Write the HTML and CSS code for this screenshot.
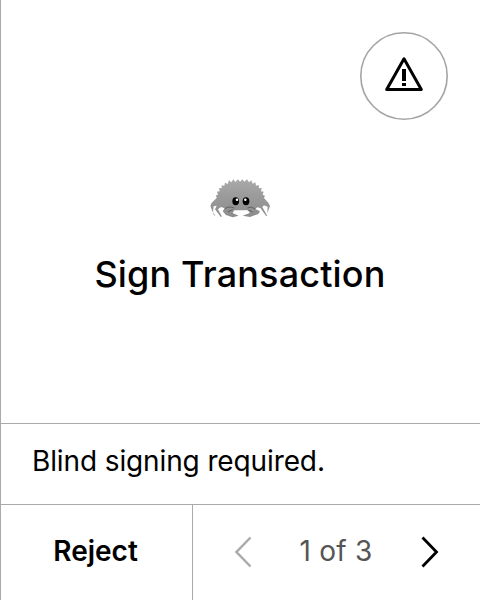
FILE: index.html
```html
<!DOCTYPE html>
<html lang="en">
<head><meta charset="utf-8"><title>Sign Transaction</title><link rel="stylesheet" href="styles.css"></head>
<body>
<main class="screen">
<section class="content">
<button class="alert" aria-label="Warning"><svg width="88" height="88" viewBox="0 0 88 88"><circle cx="44" cy="44" r="43.200" fill="none" stroke="#a4a4a4" stroke-width="1.600"/><g transform="translate(24 24)"><path d="M20 2.800L37.300 33.500H2.700Z" fill="none" stroke="#000" stroke-width="3" stroke-linejoin="round"/><path d="M18 13h4v12h-4zM18 27h4v3h-4z"/></g></svg></button>
<div class="summary">
<svg class="crab" width="60" height="40" viewBox="30 27 180 120">
<defs><linearGradient id="shell" x1="0" y1="0" x2="0" y2="1"><stop offset="0" stop-color="#aaa"/><stop offset=".4" stop-color="#9c9c9c"/><stop offset="1" stop-color="#8c8c8c"/></linearGradient></defs>
<path fill="url(#shell)" d="M50 84L48 76L54 74L51 65L59 64L57 54L65 55L65 46L73 47L75 38L83 42L87 31L94 37L100 28L106 36L114 28L120 35L127 28L133 35L141 28L147 37L154 31L158 41L166 37L168 47L176 45L177 55L185 54L183 64L191 65L188 74L195 77L192 84L205 98L210 108L202 130L203 110L192 106L187 111L202 138L198 137L181 114L172 112L166 117L180 124L175 132L150 141L128 137L147 130L140 121H104L98 129L116 137L98 142L78 135L68 124L74 115L63 111L54 118L66 140L62 140L45 118L50 107L41 109L39 127L46 137L42 136L31 108L35 98Z"/>
<path d="M74 117Q85 107 103 114M166 117Q154 107 142 114M84 125L98 119M158 126L145 120" fill="none" stroke="#555" stroke-width="2.500"/>
<path d="M102 122Q123 127 143 121L150 128L132 132L128 137L118 137L116 132L99 129Z" fill="#fff"/>
<ellipse cx="107" cy="94" rx="10" ry="12"/><ellipse cx="138" cy="94" rx="10" ry="12"/>
<circle cx="111" cy="89" r="3.800" fill="#fff"/><circle cx="136" cy="89" r="3.800" fill="#fff"/>
</svg>
<h1 class="title">Sign Transaction</h1>
</div>
</section>
<p class="notice">Blind signing required.</p>
<footer class="footer">
<button class="reject">Reject</button>
<nav class="pager"><svg width="18" height="32" viewBox="0 0 18 32"><path d="M16.500 1.500L2.500 16L16.500 30.500" fill="none" stroke="#aaa" stroke-width="2.500"/></svg><span class="count">1 of 3</span><svg width="18" height="32" viewBox="0 0 18 32"><path d="M1.500 1.500L15.500 16L1.500 30.500" fill="none" stroke="#000" stroke-width="2.800"/></svg></nav>
</footer>
</main>
</body>
</html>
```
FILE: styles.css
```css
* { box-sizing: border-box; }
body { margin: 0; background: #fff; color: #000; font-family: Inter, sans-serif; }
.screen { width: 480px; height: 600px; display: flex; flex-direction: column; border-left: 1px solid #aaa; }
.content { height: 423px; display: flex; flex-direction: column; padding-top: 32px; }
.alert { width: 88px; height: 88px; border: 0; border-radius: 50%; background: #fff; align-self: flex-end; margin-right: 32px; padding: 0; }
.alert svg { display: block; }
.summary { display: flex; flex-direction: column; align-items: center; padding-top: 59px; margin-left: -1px; }
.title { margin: 33px 0 0; font-size: 36px; line-height: 44px; font-weight: 500; letter-spacing: 0.16px; }
.notice { margin: 0; height: 81px; border-top: 1px solid #aaa; padding: 19px 31px; font-size: 28px; line-height: 36px; letter-spacing: -0.12px; }
.footer { height: 96px; border-top: 1px solid #aaa; display: flex; }
.reject { width: 192px; border: 0; border-right: 1px solid #aaa; background: #fff; color: #000; font: 600 28px/36px Inter, sans-serif; padding: 0 2px 3px 0; }
.pager { flex: 1; display: flex; align-items: center; justify-content: space-between; padding: 0 41px 2px; }
.count { color: #555; font-size: 28px; line-height: 36px; letter-spacing: 0.2px; padding: 0 1px 1px 0; }
```
